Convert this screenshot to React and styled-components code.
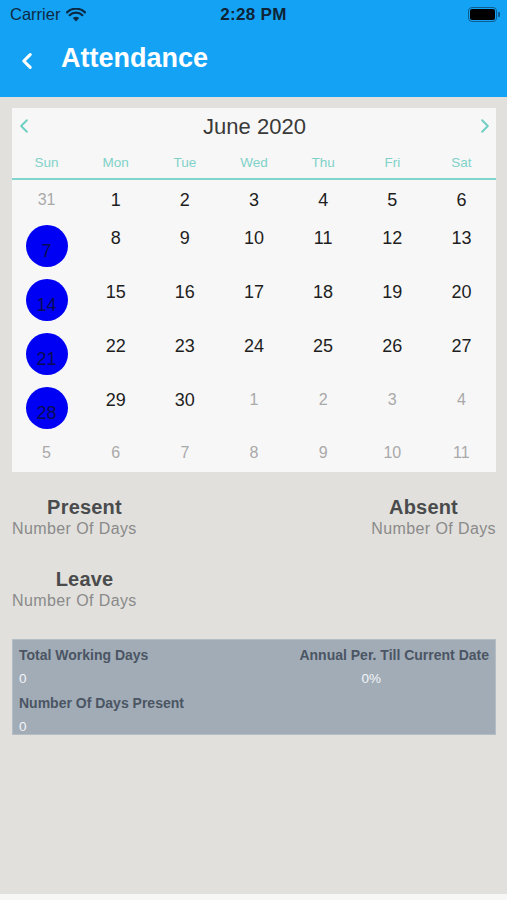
import React from "react";
import styled, { createGlobalStyle } from "styled-components";

// ── Styles ──────────────────────────────────────────────────
const GlobalStyle = createGlobalStyle`
  html, body {
    margin: 0;
    padding: 0;
    background: #f7f7f5;
    font-family: "Liberation Sans", Arial, sans-serif;
  }
`;

const Screen = styled.div`
  width: 507px;
  height: 894px;
  background: #e1e0dc;
  display: flex;
  flex-direction: column;
`;

const TopBar = styled.div`
  background: #14a3f4;
  height: 97px;
  display: flex;
  flex-direction: column;
`;

const StatusBar = styled.div`
  height: 29px;
  display: grid;
  grid-template-columns: 1fr auto 1fr;
  align-items: center;
  padding: 0 10px;
  color: #0d2a45;
  font-size: 16.5px;
`;

const Carrier = styled.div`
  display: flex;
  align-items: center;
  gap: 6px;
`;

const Clock = styled.div`
  font-weight: 700;
  font-size: 17px;
  letter-spacing: 0.3px;
  color: #0f2336;
`;

const Battery = styled.div`
  justify-self: end;
  width: 25px;
  height: 11px;
  border: 1.5px solid #0e5c92;
  border-radius: 4px;
  padding: 1px;
  position: relative;

  &::before {
    content: "";
    display: block;
    width: 100%;
    height: 100%;
    background: #000;
    border-radius: 2px;
  }

  &::after {
    content: "";
    position: absolute;
    right: -4px;
    top: 4px;
    width: 2px;
    height: 5px;
    background: #0e5c92;
    border-radius: 0 1px 1px 0;
  }
`;

const NavBar = styled.div`
  flex: 1;
  display: flex;
  align-items: center;
  padding: 0 0 9px 18px;
  gap: 25px;
`;

const BackIcon = styled.div`
  display: flex;
  margin-top: 5px;
`;

const NavTitle = styled.div`
  color: #fff;
  font-size: 27px;
  font-weight: 700;
`;

const Body = styled.div`
  padding: 11px 11px 0 12px;
  display: flex;
  flex-direction: column;
`;

// Calendar
const Calendar = styled.div`
  background: #f7f7f7;
  display: flex;
  flex-direction: column;
`;

const MonthRow = styled.div`
  height: 38px;
  display: flex;
  align-items: center;
  justify-content: space-between;
  padding: 0 3px 0 4px;
`;

const MonthLabel = styled.div`
  font-size: 22px;
  color: #3a3a3a;
`;

const Arrow = styled.div`
  display: flex;
  align-items: center;
  justify-content: center;
  margin-top: -3px;
`;

const WeekRow = styled.div`
  display: grid;
  grid-template-columns: repeat(7, 1fr);
  height: 32px;
  align-items: center;
  border-bottom: 2px solid #80d6cf;
`;

const WeekDay = styled.div`
  text-align: center;
  font-size: 13.5px;
  color: #7fd2c9;
  margin-top: 1px;
`;

const DayRow = styled.div`
  display: grid;
  grid-template-columns: repeat(7, 1fr);
  align-items: start;
`;

const DayCell = styled.div`
  min-height: 38px;
  display: flex;
  justify-content: center;
  padding-top: ${(p) => (p.$last ? "8px" : "9px")};
  box-sizing: border-box;
  font-size: ${(p) => (p.$muted ? "16px" : "18px")};
  line-height: 22px;
  color: ${(p) => (p.$muted ? "#a9a9a9" : "#1e1e1e")};
`;

const HolidayCell = styled.div`
  display: flex;
  justify-content: center;
  padding: 7px 0 5px;
`;

const Circle = styled.div`
  width: 42px;
  height: 42px;
  border-radius: 50%;
  background: #0000f5;
  color: #0a0a55;
  font-size: 18px;
  display: flex;
  align-items: center;
  justify-content: center;
  padding-top: 11px;
  box-sizing: border-box;
`;

// Stats
const Stats = styled.div`
  display: grid;
  grid-template-columns: 145px 1fr 145px;
  row-gap: 28px;
  padding-top: 23px;
`;

const Stat = styled.div`
  display: flex;
  flex-direction: column;
  align-items: ${(p) => (p.$right ? "flex-end" : "flex-start")};
  grid-column: ${(p) => (p.$right ? 3 : 1)};
`;

const StatTitle = styled.div`
  align-self: stretch;
  text-align: center;
  font-size: 20px;
  font-weight: 700;
  letter-spacing: 0.2px;
  color: #4a4b4d;
  line-height: 24px;
`;

const StatSub = styled.div`
  font-size: 16px;
  letter-spacing: 0.4px;
  color: #8a8a8a;
  line-height: 20px;
`;

// Summary box
const Summary = styled.div`
  margin-top: 28px;
  background: #a1acb7;
  border: 1px solid #b4bcc4;
  display: grid;
  grid-template-columns: 1fr auto;
  row-gap: 8px;
  padding: 7px 6px 0 6px;
  height: 96px;
  box-sizing: border-box;
`;

const SumLabel = styled.div`
  font-size: 14px;
  font-weight: 700;
  color: #4b5563;
  line-height: 16px;
  text-align: ${(p) => (p.$right ? "right" : "left")};
`;

const SumValue = styled.div`
  font-size: 13.5px;
  color: #f3f5f7;
  line-height: 16px;
  text-align: ${(p) => (p.$center ? "center" : "left")};
  padding-right: ${(p) => (p.$center ? "46px" : "0")};
`;

// ── Data ────────────────────────────────────────────────────
const WEEK = ["Sun", "Mon", "Tue", "Wed", "Thu", "Fri", "Sat"];

const ROWS = [
  [31, 1, 2, 3, 4, 5, 6],
  [7, 8, 9, 10, 11, 12, 13],
  [14, 15, 16, 17, 18, 19, 20],
  [21, 22, 23, 24, 25, 26, 27],
  [28, 29, 30, 1, 2, 3, 4],
  [5, 6, 7, 8, 9, 10, 11],
];

const STATS = [
  { title: "Present" },
  { title: "Absent", right: true },
  { title: "Leave" },
];

const Chevron = ({ dir = "left", color, size = 14, stroke = 2 }) => (
  <svg width={size} height={size} viewBox="0 0 14 14" fill="none">
    <path
      d={dir === "left" ? "M9.5 2 L4.5 7 L9.5 12" : "M4.5 2 L9.5 7 L4.5 12"}
      stroke={color}
      strokeWidth={stroke}
      strokeLinecap="round"
      strokeLinejoin="round"
    />
  </svg>
);

const Wifi = () => (
  <svg width="20" height="14" viewBox="0 0 20 14">
    <path d="M10 13.5 L6.8 10 A4.6 4.6 0 0 1 13.2 10 Z" fill="#0d2a45" />
    <path
      d="M3.6 7.2 A9 9 0 0 1 16.4 7.2"
      stroke="#0d2a45"
      strokeWidth="2.2"
      fill="none"
      strokeLinecap="round"
    />
    <path
      d="M1 4.4 A12.8 12.8 0 0 1 19 4.4"
      stroke="#0d2a45"
      strokeWidth="2.2"
      fill="none"
      strokeLinecap="round"
    />
  </svg>
);

// ── Component ────────────────────────────────────────────────
const App = () => {
  return (
    <Screen>
      <GlobalStyle />
      <TopBar>
        <StatusBar>
          <Carrier>
            Carrier
            <Wifi />
          </Carrier>
          <Clock>2:28 PM</Clock>
          <Battery />
        </StatusBar>
        <NavBar>
          <BackIcon>
            <Chevron dir="left" color="#fff" size={18} stroke={2.4} />
          </BackIcon>
          <NavTitle>Attendance</NavTitle>
        </NavBar>
      </TopBar>

      <Body>
        <Calendar>
          <MonthRow>
            <Arrow>
              <Chevron dir="left" color="#6fcfc3" size={16} stroke={1.7} />
            </Arrow>
            <MonthLabel>June 2020</MonthLabel>
            <Arrow>
              <Chevron dir="right" color="#6fcfc3" size={16} stroke={1.7} />
            </Arrow>
          </MonthRow>
          <WeekRow>
            {WEEK.map((d) => (
              <WeekDay key={d}>{d}</WeekDay>
            ))}
          </WeekRow>
          {ROWS.map((row, ri) => (
            <DayRow key={ri}>
              {row.map((n, ci) => {
                const muted = (ri === 0 && n > 7) || (ri >= 4 && n < 15);
                if (ci === 0 && !muted) {
                  return (
                    <HolidayCell key={ci}>
                      <Circle>{n}</Circle>
                    </HolidayCell>
                  );
                }
                return (
                  <DayCell key={ci} $muted={muted} $last={ri === 5}>
                    {n}
                  </DayCell>
                );
              })}
            </DayRow>
          ))}
        </Calendar>

        <Stats>
          {STATS.map((s) => (
            <Stat key={s.title} $right={s.right}>
              <StatTitle>{s.title}</StatTitle>
              <StatSub>Number Of Days</StatSub>
            </Stat>
          ))}
        </Stats>

        <Summary>
          <SumLabel>Total Working Days</SumLabel>
          <SumLabel $right>Annual Per. Till Current Date</SumLabel>
          <SumValue>0</SumValue>
          <SumValue $center>0%</SumValue>
          <SumLabel>Number Of Days Present</SumLabel>
          <div />
          <SumValue>0</SumValue>
          <div />
        </Summary>
      </Body>
    </Screen>
  );
};

export default App;
